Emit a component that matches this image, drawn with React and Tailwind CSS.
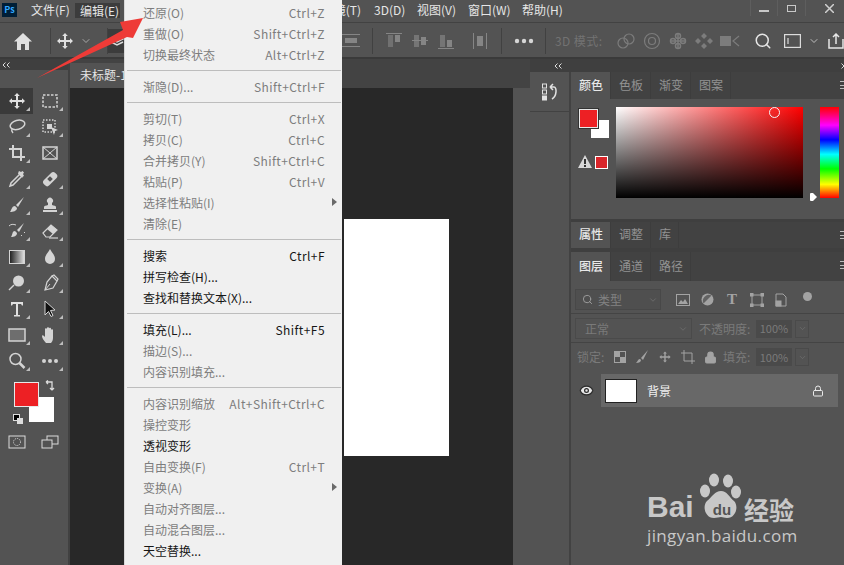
import { Search, ChevronDown, Lock, Eye } from "lucide-react";

const menuGroups = [
  [
    ["还原(O)", "Ctrl+Z", true],
    ["重做(O)", "Shift+Ctrl+Z", true],
    ["切换最终状态", "Alt+Ctrl+Z", true],
  ],
  [["渐隐(D)...", "Shift+Ctrl+F", true]],
  [
    ["剪切(T)", "Ctrl+X", true],
    ["拷贝(C)", "Ctrl+C", true],
    ["合并拷贝(Y)", "Shift+Ctrl+C", true],
    ["粘贴(P)", "Ctrl+V", true],
    ["选择性粘贴(I)", "", true, true],
    ["清除(E)", "", true],
  ],
  [
    ["搜索", "Ctrl+F"],
    ["拼写检查(H)..."],
    ["查找和替换文本(X)..."],
  ],
  [
    ["填充(L)...", "Shift+F5"],
    ["描边(S)...", "", true],
    ["内容识别填充...", "", true],
  ],
  [
    ["内容识别缩放", "Alt+Shift+Ctrl+C", true],
    ["操控变形", "", true],
    ["透视变形"],
    ["自由变换(F)", "Ctrl+T", true],
    ["变换(A)", "", true, true],
    ["自动对齐图层...", "", true],
    ["自动混合图层...", "", true],
    ["天空替换..."],
  ],
];

function EditMenu() {
  return (
    <div className="absolute left-[124px] top-0 z-10 w-[218px] h-[565px] bg-[#f0f0f0] pt-[2px] border-l border-[#d8d8d8] overflow-hidden">
      {menuGroups.map((group, i) => (
        <div key={i}>
          {i > 0 && (
            <div className="h-[11px] flex items-center pl-[2px] pr-[1px]">
              <div className="h-px w-full bg-[#bdbdbd]" />
            </div>
          )}
          {group.map(([label, keys, off, sub]) => (
            <div
              key={label}
              className={`relative h-[21px] flex items-center justify-between pl-[18px] pr-[17px] text-[12px] ${off ? "text-[#7d7d7d]" : "text-[#161616]"}`}
            >
              <span>{label}</span>
              <span className="tracking-[0.42px]">{keys}</span>
              {sub && (
                <span className="absolute right-[5px] top-[6px] w-0 h-0 border-y-[4px] border-y-transparent border-l-[5px] border-l-[#6a6a6a]" />
              )}
            </div>
          ))}
        </div>
      ))}
    </div>
  );
}

function Ico({ children, size = 20, box = 20, className = "" }) {
  return (
    <svg width={size} height={size} viewBox={`0 0 ${box} ${box}`} fill="none" stroke="#d4d4d4" strokeWidth="1.500" className={className}>
      {children}
    </svg>
  );
}

function MoveGlyph() {
  return (
    <g fill="#e0e0e0" stroke="none">
      <path d="M10 2l2.800 3H11v4h4V7.200L18 10l-3 2.800V11h-4v4h1.800L10 18l-2.800-3H9v-4H5v1.800L2 10l3-2.800V9h4V5H7.200z" />
    </g>
  );
}

function Collapse({ right }) {
  return (
    <svg width="8" height="6" viewBox="0 0 8 6" fill="none" stroke="#dddddd" strokeWidth="1">
      <path d={right ? "M0.500 0.500l2.500 2.500-2.500 2.500M4.500 0.500l2.500 2.500-2.500 2.500" : "M3.500 0.500L1 3l2.500 2.500M7.500 0.500L5 3l2.500 2.500"} />
    </svg>
  );
}

const tools = [
  <MoveGlyph />,
  <rect x="3" y="4" width="14" height="12" strokeDasharray="2.500 1.500" />,
  <><ellipse cx="10.500" cy="8" rx="7.500" ry="4.500" transform="rotate(-15 10 8)" /><path d="M5 12c-1 2 0 3 1 4" /></>,
  <><rect x="3" y="3" width="12" height="12" strokeDasharray="1.500 1.500" /><rect x="7" y="7" width="5" height="5" fill="#d4d4d4" stroke="none" /><path d="M11 10l7 3-3 1-1 4z" fill="#d4d4d4" stroke="none" /></>,
  <path d="M6 2v12h12M2 6h12v12" strokeWidth="2" />,
  <><rect x="3" y="4" width="14" height="12" /><path d="M3 4l14 12M17 4L3 16" strokeWidth="1" /></>,
  <><path d="M12 6l-8 8-1 3 3-1 8-8" /><path d="M11 5l4 4 1-1.500 1-.500-1-2 1-1.500-1.500-1.500-1.500 1-2-1-.500 1z" fill="#d4d4d4" stroke="none" /></>,
  <><rect x="2" y="6.500" width="16" height="7.500" rx="3" transform="rotate(-45 10 10)" fill="#d4d4d4" stroke="none" /><rect x="8" y="8" width="4" height="4" transform="rotate(-45 10 10)" fill="#555" stroke="none" /></>,
  <><path d="M17 2l-8 8 2 2z" fill="#d4d4d4" stroke="none" /><path d="M8 11c-3 0-3 3-5 6 3 0 7-1 7-4z" fill="#d4d4d4" stroke="none" /></>,
  <><rect x="3" y="15" width="14" height="2" fill="#d4d4d4" stroke="none" /><path d="M4 14v-2c0-1 2-1.500 4-2V8a3 3 0 114 0v2c2 .500 4 1 4 2v2z" fill="#d4d4d4" stroke="none" /></>,
  <><path d="M17 2l-7 7 2 2z" fill="#d4d4d4" stroke="none" /><path d="M8 10c-3 0-2 3-4 6 3 0 6-1 6-4z" fill="#d4d4d4" stroke="none" /><path d="M2 5c2-2 4-2 7-1M14 14l1 1M17 11l1 1" strokeWidth="1" /></>,
  <><path d="M3 12l8-8 6 5-7 7H6z" strokeWidth="1.200" /><path d="M11 4l6 5-4 4-6-5z" fill="#d4d4d4" stroke="none" /><path d="M9 17h9" strokeWidth="1.200" /></>,
  null,
  <path d="M10 2c2 4 5 6 5 10a5 5 0 01-10 0c0-4 3-6 5-10z" fill="#d4d4d4" stroke="none" />,
  <><circle cx="11.500" cy="8" r="5.500" fill="#d4d4d4" stroke="none" /><path d="M7 12l-5 5" /></>,
  <><path d="M12 3l5 5-4 7-8 2 2-8z" strokeWidth="1.200" /><path d="M5 17l5-6" strokeWidth="1" /><path d="M12 3l2-1 4 4-1 2" strokeWidth="1.200" /></>,
  <path d="M4 3h12v3.500h-1L14 5h-3v11h2v1.500H7V16h2V5H6L5 6.500H4z" fill="#e0e0e0" stroke="none" />,
  <path d="M5 2l10 9-4.500.500 2.500 5-2 1-2.500-5L5 16z" fill="#111" stroke="#d4d4d4" strokeWidth="1" />,
  <rect x="2" y="4" width="16" height="12" fill="#6e6e6e" stroke="#d4d4d4" />,
  <path d="M6 18c-2-2-4-5-4-7 0-1 1-1 2 0l1 1V4c0-1 2-1 2 0v4V3c0-1 2-1 2 0v5V3.500c0-1 2-1 2 0V9V5c0-1 2-1 2 0v8c0 2-1 4-2 5z" fill="#d4d4d4" stroke="none" />,
  <><circle cx="8.500" cy="8" r="5.500" strokeWidth="1.500" /><path d="M12.500 12l5 5" strokeWidth="2.500" /></>,
  <g fill="#d4d4d4" stroke="none"><circle cx="4" cy="10" r="2" /><circle cx="10" cy="10" r="2" /><circle cx="16" cy="10" r="2" /></g>,
];

function Toolbox() {
  return (
    <div className="w-[70px] shrink-0 h-full bg-[#535353] border-r-2 border-[#414141] flex flex-col">
      <div className="h-[11px] bg-[#3f3f3f] flex items-center pl-[2px]"><Collapse /></div>
      <div className="h-[18px]" />
      <div className="grid grid-cols-[33px_33px] auto-rows-[26px]">
        {tools.map((t, i) => (
          <div key={i} className={`relative flex items-center justify-center ${i === 0 ? "bg-[#3a3a3a]" : ""}`}>
            {t ? (
              <Ico>{t}</Ico>
            ) : (
              <div className="w-[16px] h-[14px] border border-[#d4d4d4] bg-[linear-gradient(to_right,#222,#ddd)]" />
            )}
            {i !== 5 && (
              <span className="absolute right-[3px] bottom-[3px] w-0 h-0 border-l-[4px] border-l-transparent border-b-[4px] border-b-[#bdbdbd]" />
            )}
          </div>
        ))}
      </div>
      <div className="relative h-[55px] shrink-0">
        <div className="absolute left-[14px] top-[8px] z-[1] w-[25px] h-[25px] bg-[#ed2024] border border-[#e8e8e8]" />
        <div className="absolute left-[29px] top-[23px] w-[25px] h-[25px] bg-white" />
        <svg width="12" height="12" viewBox="0 0 12 12" fill="none" stroke="#dcdcdc" strokeWidth="1.300" className="absolute left-[45px] top-[6px]">
          <path d="M1 2h6v8M1 2l2-1.500M1 2l2 2M7 10l-2-2M7 10l2-2" />
        </svg>
        <div className="absolute left-[13px] top-[40px] w-[7px] h-[7px] bg-black border border-[#ddd]" />
        <div className="absolute left-[17px] top-[44px] w-[6px] h-[6px] bg-[#ddd]" />
      </div>
      <div className="grid grid-cols-[33px_33px] h-[26px]">
        <div className="flex items-center justify-center">
          <svg width="18" height="14" viewBox="0 0 18 14" fill="none" stroke="#dcdcdc" strokeWidth="1">
            <rect x="1" y="1" width="16" height="12" />
            <circle cx="9" cy="7" r="3.500" strokeDasharray="1 1" />
          </svg>
        </div>
        <div className="flex items-center justify-center">
          <svg width="18" height="14" viewBox="0 0 18 14" fill="none" stroke="#dcdcdc" strokeWidth="1">
            <rect x="6" y="1" width="11" height="8" />
            <rect x="1" y="5" width="10" height="8" fill="#535353" />
          </svg>
        </div>
      </div>
    </div>
  );
}

function Sep() {
  return <div className="w-px h-[26px] bg-[#414141] shrink-0" />;
}

function Slot({ children, className = "w-[26px]" }) {
  return <div className={`flex items-center justify-center shrink-0 ${className}`}>{children}</div>;
}

function OptionsBar() {
  const dim = "#858585";
  const dim3d = "#7c7c7c";
  return (
    <div className="h-[34px] flex items-center bg-[#535353] pt-[2px]">
      <Slot className="w-[46px]">
        <svg width="18" height="17" viewBox="0 0 18 17" fill="#e0e0e0"><path d="M9 0L0 8.500h3V17h4v-6h4v6h4V8.500h3z" /></svg>
      </Slot>
      <div className="w-[4px]" />
      <Sep />
      <Slot className="w-[28px]"><Ico><MoveGlyph /></Ico></Slot>
      <Slot className="w-[14px]"><ChevronDown size={12} color="#a8a8a8" /></Slot>
      <div className="w-[14px]" />
      <Sep />
      <Slot className="w-[18px] h-[24px] bg-[#3c3c3c]">
        <svg width="14" height="14" viewBox="0 0 14 14" fill="none" stroke="#dcdcdc" strokeWidth="1.500"><path d="M1 5l6-3 6 3-6 3zM1 8l6 3 6-3" /></svg>
      </Slot>
      <div className="w-[213px]" />
      <Slot>
        <svg width="18" height="14" viewBox="0 0 18 14" fill={dim}><rect x="0" y="0" width="18" height="1" /><rect x="3" y="4" width="12" height="5" /><rect x="0" y="12" width="18" height="1" /></svg>
      </Slot>
      <div className="w-[8px]" />
      <Sep />
      <div className="w-[8px]" />
      <Slot>
        <svg width="16" height="16" viewBox="0 0 16 16" fill={dim}><rect y="0" width="16" height="1" /><rect x="2" y="2" width="5" height="12" opacity=".6" /><rect x="9" y="2" width="5" height="7" /></svg>
      </Slot>
      <Slot>
        <svg width="16" height="16" viewBox="0 0 16 16" fill={dim}><rect y="7" width="16" height="1" /><rect x="2" y="2" width="5" height="12" opacity=".7" /><rect x="9" y="4" width="5" height="8" /></svg>
      </Slot>
      <Slot>
        <svg width="16" height="16" viewBox="0 0 16 16" fill={dim}><rect y="15" width="16" height="1" /><rect x="2" y="2" width="5" height="12" opacity=".7" /><rect x="9" y="7" width="5" height="7" /></svg>
      </Slot>
      <div className="w-[8px]" />
      <Slot>
        <svg width="16" height="16" viewBox="0 0 16 16" fill={dim}><rect x="1" y="0" width="1" height="16" /><rect x="14" y="0" width="1" height="16" /><rect x="5" y="3" width="6" height="10" /></svg>
      </Slot>
      <div className="w-[8px]" />
      <Sep />
      <Slot className="w-[43px]">
        <svg width="20" height="6" viewBox="0 0 20 6" fill="#d6d6d6"><circle cx="3" cy="3" r="2.200" /><circle cx="10" cy="3" r="2.200" /><circle cx="17" cy="3" r="2.200" /></svg>
      </Slot>
      <Sep />
      <div className="w-[9px]" />
      <span className="w-[58px] shrink-0 text-[12px] text-[#727272] tracking-[0.4px]">3D 模式:</span>
      <Slot>
        <svg width="20" height="16" viewBox="0 0 20 16" fill="none" stroke={dim3d} strokeWidth="1.200"><circle cx="7" cy="10" r="5" /><circle cx="13" cy="6" r="5" /></svg>
      </Slot>
      <Slot>
        <svg width="18" height="18" viewBox="0 0 18 18" fill="none" stroke={dim3d} strokeWidth="1.200"><circle cx="9" cy="9" r="7.500" /><circle cx="9" cy="9" r="3.500" /></svg>
      </Slot>
      <Slot>
        <svg width="18" height="18" viewBox="0 0 18 18" fill="none" stroke={dim3d} strokeWidth="1.500"><path d="M9 1v16M1 9h16" /><circle cx="9" cy="4" r="2.500" /><circle cx="9" cy="14" r="2.500" /><circle cx="4" cy="9" r="2.500" /><circle cx="14" cy="9" r="2.500" /></svg>
      </Slot>
      <Slot>
        <svg width="20" height="18" viewBox="0 0 20 18" fill={dim3d}><path d="M10 1l3 3-3 3-3-3zM10 11l3 3-3 3-3-3zM1 9l3-3 3 3-3 3zM13 9l3-3 3 3-3 3z" /></svg>
      </Slot>
      <Slot>
        <svg width="20" height="12" viewBox="0 0 20 12" fill={dim3d}><rect x="0" y="1" width="11" height="10" /><path d="M19 1l-6 5 6 5" fill="none" stroke={dim3d} strokeWidth="1.200" /></svg>
      </Slot>
      <div className="w-[7px]" />
      <Slot><Search size={18} color="#e6e6e6" strokeWidth={2} /></Slot>
      <div className="w-[4px]" />
      <Slot>
        <svg width="17" height="14" viewBox="0 0 17 14" fill="none" stroke="#dcdcdc" strokeWidth="1.200"><rect x=".6" y=".6" width="15.800" height="12.800" /><path d="M4 4v6" /></svg>
      </Slot>
      <Slot className="w-[16px]"><ChevronDown size={12} color="#bdbdbd" /></Slot>
      <Slot className="w-[16px] ml-[6px]">
        <svg width="16" height="16" viewBox="0 0 16 16" fill="none" stroke="#e6e6e6" strokeWidth="1.500"><path d="M1 6v9h14V6M8 11V1M5 4l3-3 3 3" /></svg>
      </Slot>
    </div>
  );
}

function PanelTabs({ tabs, height = "h-[27px]" }) {
  return (
    <div className={`flex bg-[#424242] shrink-0 relative ${height}`}>
      {tabs.map((t, i) => (
        <div
          key={t}
          className={`pl-[8px] pr-[7px] pb-[2px] flex items-center text-[12px] border-r border-[#3d3d3d] ${i === 0 ? "bg-[#535353] text-[#e8e8e8] font-medium" : "text-[#929292]"}`}
        >
          {t}
        </div>
      ))}
      <div className="absolute right-[-2px] top-[9px] w-[6px] h-[8px] border-y border-[#bbb] flex items-center">
        <div className="w-full h-px bg-[#bbb]" />
      </div>
    </div>
  );
}

function ColorPanel() {
  return (
    <div className="h-[147px] shrink-0">
      <PanelTabs tabs={["颜色", "色板", "渐变", "图案"]} />
      <div className="flex h-[120px]">
        <div className="w-[45px] shrink-0 relative">
          <div className="absolute left-[8px] top-[10px] z-[1] w-[19px] h-[19px] bg-[#ed2024] border border-[#e8e8e8] outline outline-1 outline-[#333]" />
          <div className="absolute left-[20px] top-[21px] w-[18px] h-[18px] bg-white" />
          <svg width="14" height="13" viewBox="0 0 14 13" className="absolute left-[7px] top-[56px]">
            <path d="M7 0l7 13H0z" fill="#d8d8d8" />
            <rect x="6" y="4" width="2" height="5" fill="#333" />
            <rect x="6" y="10" width="2" height="2" fill="#333" />
          </svg>
          <div className="absolute left-[24px] top-[57px] w-[13px] h-[13px] bg-[#d9252a] border border-white" />
        </div>
        <div className="relative mt-[8px] w-[187px] h-[91px] bg-[linear-gradient(to_top,#000,transparent),linear-gradient(to_right,#fff,#f00)]">
          <div className="absolute left-[153px] top-[0px] w-[11px] h-[11px] rounded-full border border-[#f4f4f4]" />
        </div>
        <div className="relative ml-[17px] mt-[8px] w-[19px] h-[91px] bg-[linear-gradient(to_bottom,#f00,#f0f_20%,#00f_36%,#0ff_52%,#0f0_68%,#ff0_85%,#f00)]">
          <svg width="7" height="8" viewBox="0 0 7 8" fill="#ffffff" className="absolute left-[-10px] bottom-[-3px]">
            <path d="M0 1q0-1 1-1h2l4 4-4 4H1q-1 0-1-1z" />
          </svg>
        </div>
      </div>
    </div>
  );
}

function LayersPanel() {
  const dimIcon = "#a3a3a3";
  return (
    <div className="flex-1 flex flex-col">
      <PanelTabs tabs={["图层", "通道", "路径"]} height="h-[29px]" />
      <div className="h-[33px] flex items-center pl-[4px] pt-[5px] border-b border-[#444] text-[12px] text-[#828282]">
        <div className="w-[86px] h-[21px] flex items-center gap-[5px] pl-[6px] border border-[#484848] bg-[#4f4f4f]">
          <Search size={11} color="#a0a0a0" />
          <span className="flex-1">类型</span>
          <ChevronDown size={10} color="#6f6f6f" className="mr-[2px]" />
        </div>
        <div className="flex items-center gap-[11px] ml-[15px]">
          <svg width="14" height="12" viewBox="0 0 14 12" fill="none" stroke={dimIcon}><rect x=".5" y=".5" width="13" height="11" /><path d="M2 10l3-4 2 2 2-3 3 5z" fill={dimIcon} stroke="none" /></svg>
          <svg width="13" height="13" viewBox="0 0 13 13"><circle cx="6.500" cy="6.500" r="6" fill={dimIcon} /><path d="M10.500 2.500l-8 8A6 6 0 0110.500 2.500z" fill="#636363" /></svg>
          <span className="w-[14px] text-center text-[15px] leading-[13px] font-bold text-[#a3a3a3] font-['Liberation_Serif',serif]">T</span>
          <svg width="14" height="14" viewBox="0 0 14 14" fill="none" stroke={dimIcon}><rect x="2" y="2" width="10" height="10" /><g fill={dimIcon}><rect x="0" y="0" width="3" height="3" /><rect x="11" y="0" width="3" height="3" /><rect x="0" y="11" width="3" height="3" /><rect x="11" y="11" width="3" height="3" /></g></svg>
          <svg width="12" height="14" viewBox="0 0 12 14" fill="none" stroke={dimIcon}><path d="M1 13V1h7l3 3v9z" /><rect x="1" y="8" width="5" height="5" fill={dimIcon} /></svg>
          <div className="w-[9px] h-[9px] rounded-full bg-[#a3a3a3] mb-[7px] ml-[5px]" />
        </div>
      </div>
      <div className="h-[29px] flex items-center pl-[4px] pt-[1px] border-b border-[#444] text-[12px] text-[#7a7a7a]">
        <div className="w-[117px] h-[21px] flex items-center justify-between pl-[9px] pr-[3px] border border-[#4a4a4a]">
          <span>正常</span>
          <ChevronDown size={10} color="#6f6f6f" />
        </div>
        <span className="ml-[7px] w-[57px] shrink-0">不透明度:</span>
        <div className="w-[36px] h-[18px] bg-[#4a4a4a] flex items-center justify-center text-[11px]">100%</div>
        <div className="w-[14px] h-[18px] ml-[3px] border border-[#4a4a4a] flex items-center justify-center"><ChevronDown size={9} color="#6f6f6f" /></div>
      </div>
      <div className="h-[28px] flex items-center pl-[6px] text-[12px] text-[#7a7a7a]">
        <span className="w-[37px] shrink-0">锁定:</span>
        <div className="grid grid-cols-2 w-[12px] h-[12px] border border-[#a3a3a3]">
          <div className="bg-[#a3a3a3]" /><div /><div /><div className="bg-[#a3a3a3]" />
        </div>
        <svg width="14" height="14" viewBox="0 0 14 14" fill={dimIcon} className="ml-[9px]"><path d="M13 0L6 8l2 2zM5 9c-2 0-2 2-4 4 3 0 5-1 5-3z" /></svg>
        <svg width="14" height="14" viewBox="0 0 20 20" className="ml-[9px]"><path fill={dimIcon} d="M10 2l2.800 3H11v4h4V7.200L18 10l-3 2.800V11h-4v4h1.800L10 18l-2.800-3H9v-4H5v1.800L2 10l3-2.800V9h4V5H7.200z" /></svg>
        <svg width="14" height="14" viewBox="0 0 14 14" fill="none" stroke={dimIcon} className="ml-[9px]"><path d="M3 0v11h11M0 3h11v11" /></svg>
        <Lock size={13} color={dimIcon} fill={dimIcon} className="ml-[9px]" />
        <span className="ml-[6px] w-[33px] shrink-0">填充:</span>
        <div className="w-[36px] h-[18px] bg-[#4a4a4a] flex items-center justify-center text-[11px]">100%</div>
        <div className="w-[14px] h-[18px] ml-[3px] border border-[#4a4a4a] flex items-center justify-center"><ChevronDown size={9} color="#6f6f6f" /></div>
      </div>
      <div className="flex h-[33px] mt-[3px] pr-[6px]">
        <div className="w-[30px] flex items-center justify-center">
          <Eye size={15} color="#2c2c2c" fill="#e8e8e8" />
        </div>
        <div className="flex-1 flex items-center bg-[#686868] pl-[4px] text-[12px] text-[#f0f0f0]">
          <div className="w-[32px] h-[24px] bg-white border border-[#222]" />
          <span className="ml-[10px] flex-1">背景</span>
          <Lock size={12} color="#eaeaea" className="mr-[14px]" />
        </div>
      </div>
    </div>
  );
}

function RightDock() {
  return (
    <div className="flex-1 flex flex-col min-w-0">
      <div className="h-[13px] shrink-0 bg-[#3f3f3f] flex items-center justify-between pl-[24px]">
        <Collapse />
        <span className="mr-[-5px]"><Collapse right /></span>
      </div>
      <div className="flex-1 flex">
        <div className="w-[41px] shrink-0 border-r-2 border-[#424242]">
          <div className="h-[40px] border-b border-[#424242] flex items-center justify-center">
            <svg width="16" height="18" viewBox="0 0 16 18" fill="none" stroke="#e2e2e2" strokeWidth="1">
              <rect x=".5" y="1" width="4" height="4" />
              <rect x=".5" y="7" width="4" height="4" />
              <rect x=".5" y="13" width="4" height="4" fill="#e2e2e2" />
              <path d="M8 4h4c3 0 3 9-2 12M8 4l3-3M8 4l3 3" strokeWidth="1.500" />
            </svg>
          </div>
        </div>
        <div className="flex-1 flex flex-col min-w-0">
          <ColorPanel />
          <div className="h-[3px] bg-[#3f3f3f]" />
          <PanelTabs tabs={["属性", "调整", "库"]} height="h-[26px]" />
          <div className="h-[4px] bg-[#3f3f3f]" />
          <LayersPanel />
        </div>
      </div>
    </div>
  );
}

function MenuBar() {
  return (
    <div className="h-[23px] flex items-center bg-[#535353] text-[12px] text-[#e6e6e6] border-b border-[#424242] pb-[2px]">
      <div className="w-[31px] shrink-0 pl-[2px]">
        <div className="w-[15px] h-[14px] bg-[#001e36] text-[#31a8ff] text-[9px] leading-[14px] text-center font-bold">Ps</div>
      </div>
      <span className="w-[44px] shrink-0">文件(F)</span>
      <span className="w-[45px] shrink-0 bg-[#3c3c3c] pl-[5px] h-[15px] leading-[15px]">编辑(E)</span>
      {/* the rest of this stretch sits behind the open menu */}
      <div className="w-[222px] shrink-0" />
      <div className="w-[19px] shrink-0 overflow-hidden flex justify-end mr-[13px]">
        <span className="shrink-0">镜(T)</span>
      </div>
      <span className="w-[43px] shrink-0">3D(D)</span>
      <span className="w-[51px] shrink-0">视图(V)</span>
      <span className="w-[54px] shrink-0">窗口(W)</span>
      <span className="flex-1">帮助(H)</span>
      <div className="flex items-center h-[16px] shrink-0 self-start mr-[-8px]">
        <div className="w-[28px] h-[16px] border-x border-[#5e5e5e] flex items-center justify-center">
          <div className="w-[10px] h-[2px] bg-[#c8c8c8] mt-[6px]" />
        </div>
        <div className="w-[28px] h-[16px] border-r border-[#5e5e5e] flex items-center justify-center">
          <div className="w-[9px] h-[7px] border border-[#c8c8c8]" />
        </div>
        <div className="w-[46px] h-[16px] flex items-center justify-center">
          <svg width="9" height="9" viewBox="0 0 9 9" stroke="#d0d0d0" strokeWidth="1.500"><path d="M0 0l9 9M9 0L0 9" /></svg>
        </div>
      </div>
    </div>
  );
}

function App() {
  return (
    <div className="relative w-[844px] h-[565px] overflow-hidden bg-[#535353] font-['Noto_Sans_CJK_SC',sans-serif] flex flex-col">
      <MenuBar />
      <OptionsBar />
      <div className="h-[2px] bg-[#3a3a3a]" />
      <div className="flex-1 flex min-h-0">
        <Toolbox />
        <div className="w-[460px] shrink-0 flex flex-col">
          <div className="h-[29px] shrink-0 bg-[#434343] flex items-end">
            <div className="w-[60px] h-[25px] bg-[#535353] pl-[10px] text-[12px] leading-[23px] text-[#e6e6e6]">未标题-1</div>
          </div>
          <div className="flex-1 flex min-h-0">
            <div className="w-[443px] bg-[#282828] pl-[274px] pt-[131px]">
              <div className="w-[105px] h-[237px] bg-white" />
            </div>
            <div className="flex-1 bg-[#535353]" />
          </div>
        </div>
        <RightDock />
      </div>

      <EditMenu />

      {/* red annotation arrow */}
      <svg width="844" height="100" className="absolute left-0 top-0 z-20 pointer-events-none">
        <path d="M37 78L123 30L120 22L143 18L133 38L127 37Z" fill="#ee3b37" />
      </svg>

      {/* watermark */}
      <div className="absolute left-[647px] top-[473px] z-20 w-[155px] h-[74px] text-[#c8c8c8]">
        <span className="absolute left-0 top-[16px] text-[30px] leading-[36px] font-bold font-['Liberation_Sans',sans-serif]">Bai</span>
        <svg width="48" height="48" viewBox="0 0 48 48" className="absolute left-[50px] top-0">
          <g fill="#c8c8c8">
            <ellipse cx="17" cy="7" rx="5" ry="6.500" />
            <ellipse cx="31" cy="8" rx="5" ry="6.500" />
            <ellipse cx="8" cy="18" rx="5" ry="6.500" />
            <ellipse cx="39" cy="19" rx="5" ry="6.500" />
            <path d="M24 18c6 0 8 6 13 10 5 5 2 17-7 17-3 0-4-1-6-1s-4 1-7 1c-9 0-12-12-7-17 5-4 8-10 14-10z" />
          </g>
        </svg>
        <span className="absolute left-[60px] top-[28px] w-[30px] text-center text-[15px] leading-[18px] font-bold text-[#535353] font-['Liberation_Sans',sans-serif]">du</span>
        <span className="absolute left-[97px] top-[21px] text-[25px] leading-[30px] font-bold whitespace-nowrap">经验</span>
        <span className="absolute left-0 top-[52px] text-[17px] leading-[22px] tracking-[0.35px] whitespace-nowrap font-['Open_Sans',sans-serif]">jingyan.baidu.com</span>
      </div>
    </div>
  );
}

export default App;
